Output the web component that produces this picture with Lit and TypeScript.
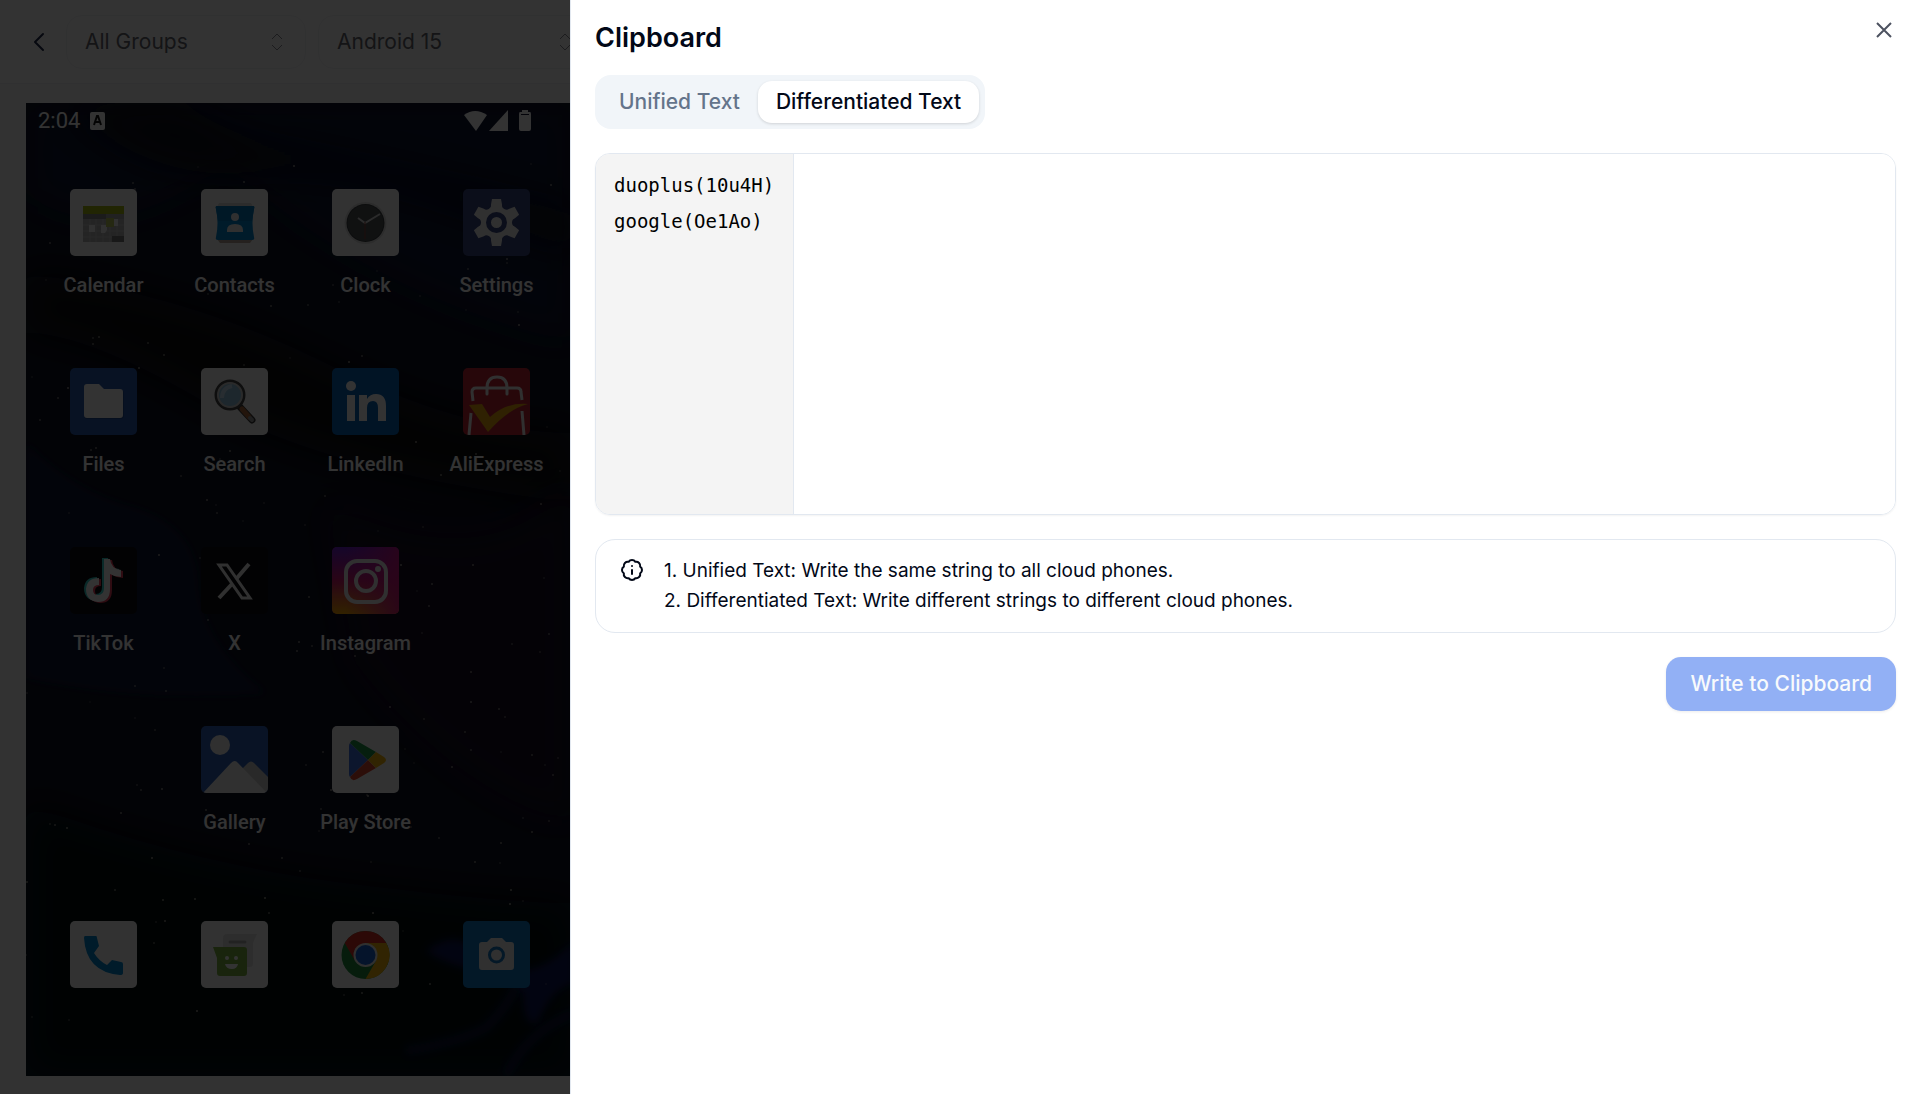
import { LitElement, html, css, svg, nothing } from "lit";
import { customElement, state } from "lit/decorators.js";

type App = { name: string; art: unknown; bg: string };

const calendar = svg`
  <rect x="13" y="17" width="41" height="36" fill="#b5b5b5"/>
  <rect x="13" y="17" width="41" height="8" fill="#a4b813"/>
  <rect x="13" y="25" width="23" height="5" fill="#858585"/>
  <rect x="36" y="25" width="18" height="5" fill="#a5a5a5"/>
  <path d="M13 36H54M13 42H54M13 48H54M20 30V53M26 30V53M33 30V53M40 30V53M47 30V53" stroke="#c8c8c8" stroke-width="1"/>
  <rect x="19" y="36" width="6" height="7" fill="#f3f3f3"/>
  <path d="M31 36H37V41L35 44H31Z" fill="#f3f3f3"/>
  <rect x="43" y="30" width="5" height="7" fill="#f3f3f3"/>
  <rect x="36" y="29" width="8" height="9" fill="#b7c95c"/>
  <rect x="42" y="47" width="12" height="6" fill="#7b7b7b"/>`;

const contacts = svg`
  <path d="M16 50H52L49 54H19Z" fill="#b9a79c"/>
  <path d="M18 14H50L52 18H16Z" fill="#d9d9d9"/>
  <path d="M16 17H52Q54 17 53 20Q50 34 53 48Q54 51 51 51H17Q14 51 15 48Q18 34 15 20Q14 17 16 17Z" fill="#0288d1"/>
  <path d="M16 17H52Q54 17 53 20L51 32H17L15 20Q14 17 16 17Z" fill="#0277bd"/>
  <circle cx="34" cy="28" r="4" fill="#eee"/>
  <path d="M26 43V41Q26 35 34 35Q42 35 42 41V43Z" fill="#eee"/>`;

const clock = svg`
  <circle cx="33.5" cy="34" r="21" fill="#dcdcdc"/>
  <circle cx="33.5" cy="34" r="19" fill="#3c4043"/>
  <circle cx="33.5" cy="34" r="18" fill="#515658"/>
  <path d="M26 29L33 34L48 25" fill="none" stroke="#d5d5d5" stroke-width="2"/>
  <path d="M33 33V50" stroke="#8e4038" stroke-width="1"/>`;

const settings = svg`
  <g fill="#eee">
    <circle cx="33.5" cy="33.5" r="17"/>
    ${[0, 60, 120, 180, 240, 300].map(
      (a) => svg`<path d="M27 21L29 10H38L40 21Z" transform="rotate(${a} 33.5 33.5)"/>`
    )}
  </g>
  ${[30, 90, 150, 210, 270, 330].map(
    (a) => svg`<circle cx="33.5" cy="14" r="4" fill="#3a4680" transform="rotate(${a} 33.5 33.5)"/>`
  )}
  <circle cx="33.5" cy="33.5" r="8" fill="#eee" stroke="#3a4680" stroke-width="5"/>`;

const files = svg`
  <path d="M16 17H29L34 22H51Q54 22 54 25V48Q54 51 51 51H17Q14 51 14 48V20Q14 17 16 17Z" fill="#214a94"/>
  <path d="M17 16H29L34 21H50Q53 21 53 24V47Q53 50 50 50H17Q14 50 14 47V19Q14 16 17 16Z" fill="#fff"/>`;

const search = svg`
  <path d="M39 39L51 52" stroke="#3a3a3a" stroke-width="7" stroke-linecap="round"/>
  <path d="M41 41L48 49" stroke="#b06a3c" stroke-width="5" stroke-linecap="round"/>
  <path d="M49 50L51 52" stroke="#9a9a9a" stroke-width="4" stroke-linecap="round"/>
  <circle cx="29" cy="27" r="14" fill="#8fc0de" stroke="#454545" stroke-width="3"/>
  <circle cx="29" cy="27" r="12" fill="none" stroke="#d2d2d2" stroke-width="2"/>
  <path d="M21 30Q21 20 31 18" fill="none" stroke="#c7e2f2" stroke-width="4"/>`;

const linkedin = svg`
  <g fill="#fff">
    <circle cx="19" cy="18" r="5"/>
    <rect x="15" y="27" width="8" height="26"/>
    <path d="M27 27H35V31Q38 26 44 26Q54 26 54 38V53H46V40Q46 33 41 33Q35 33 35 40V53H27Z"/>
  </g>`;

const aliexpress = svg`
  <g fill="none" stroke="#eee" stroke-width="3">
    <path d="M10 33L9 24Q9 20 13 20H54Q58 20 58 24L59 32"/>
    <path d="M24 26V20Q24 9 34 9Q44 9 44 20V26" stroke-linecap="round"/>
    <path d="M8 45L6 67M59 43L61 67"/>
  </g>
  <path d="M6 37L19 36L27 49Q44 34 65 36Q45 41 25 64Z" fill="#e8a70c"/>`;

const note = "M34 12H40Q41 22 51 23V30Q45 30 40 27V42Q40 55 28 55Q16 54 16 42Q17 31 29 31V38Q23 38 23 43Q23 48 28 48Q34 48 34 41Z";
const tiktok = svg`
  <path d="${note}" transform="translate(-2 -1)" fill="#35d0cc"/>
  <path d="${note}" transform="translate(2 1)" fill="#e83e5a"/>
  <path d="${note}" fill="#fff"/>`;

const xLogo = svg`
  <path d="M18 18H26L49 51H41Z" fill="none" stroke="#eee" stroke-width="3"/>
  <path d="M48 17L36 31M31 37L18 51" stroke="#eee" stroke-width="4"/>`;

const instagram = svg`
  <defs>
    <linearGradient id="ig" x1="0" y1="0" x2="0" y2="1">
      <stop offset="0" stop-color="#6a1fd0"/><stop offset=".5" stop-color="#cf1a6e"/><stop offset="1" stop-color="#f5a700"/>
    </linearGradient>
    <linearGradient id="ig2" x1="0" y1="0" x2="1" y2="0">
      <stop offset=".2" stop-color="#c2189b" stop-opacity="0"/><stop offset="1" stop-color="#d0137f" stop-opacity=".9"/>
    </linearGradient>
  </defs>
  <rect width="67" height="67" fill="url(#ig)"/>
  <rect width="67" height="67" fill="url(#ig2)"/>
  <g fill="none" stroke="#eee" stroke-width="4">
    <rect x="14" y="14" width="40" height="41" rx="11"/>
    <circle cx="34" cy="34" r="10"/>
  </g>
  <circle cx="46" cy="22" r="3" fill="#eee"/>`;

const gallery = svg`
  <circle cx="19" cy="19" r="10" fill="#eee"/>
  <path d="M40 44L47 37Q50 34 53 37L67 51V67H50Z" fill="#cdcdcd"/>
  <path d="M2 67L30 37Q34 33 37 37L66 67Z" fill="#eee"/>`;

const play = svg`
  <path d="M18 17L36 34L18 51Q17 50 17 48V20Q17 18 18 17Z" fill="#3f6fe0"/>
  <path d="M18 17Q20 12 25 15L44 26L36 34Z" fill="#1e9648"/>
  <path d="M18 51Q20 56 25 53L44 42L36 34Z" fill="#dd4530"/>
  <path d="M44 26L52 31Q56 34 52 37L44 42L36 34Z" fill="#f2b50c"/>`;

const phone = svg`<path d="M15 15H26Q27 15 27 17L29 25L24 32Q29 40 37 44L42 39L51 41Q53 41 53 43V52Q53 54 50 54Q16 51 14 17Q14 15 15 15Z" fill="#0288d1"/>`;

const messages = svg`
  <path d="M22 17Q22 13 26 13H56L52 22V43Q52 46 49 46H25Q22 46 22 43Z" fill="#e2e2e2"/>
  <path d="M29 21H44" stroke="#aaa" stroke-width="3" stroke-linecap="round"/>
  <path d="M12 26H43Q46 26 46 29V52Q46 55 43 55H19Q16 55 16 52V37Z" fill="#7cb342"/>
  <circle cx="26" cy="37" r="2" fill="#fff"/><circle cx="35" cy="37" r="2" fill="#fff"/>
  <path d="M24 43H37Q36 48 31 48Q25 48 24 43Z" fill="#fff"/>`;

const chrome = svg`
  <circle cx="33.5" cy="34" r="24" fill="#1e8e3e"/>
  <path d="M12.7 22A24 24 0 0 1 54.3 22H33.5V34L23.1 40Z" fill="#d93025"/>
  <path d="M54.3 22A24 24 0 0 1 33.5 58L43.9 40L33.5 22Z" fill="#f2b50c"/>
  <circle cx="33.5" cy="34" r="12" fill="#eee"/>
  <circle cx="33.5" cy="34" r="10" fill="#1a66d8"/>`;

const camera = svg`
  <path d="M19 21H24L28 17H39L43 21H48Q51 21 51 24V46Q51 49 48 49H19Q16 49 16 46V24Q16 21 19 21Z" fill="#eee"/>
  <circle cx="33.5" cy="34" r="7" fill="none" stroke="#1877c0" stroke-width="3"/>`;

const LIGHT = "#fbfbfb";
const APPS: (App | null)[] = [
  { name: "Calendar", art: calendar, bg: LIGHT },
  { name: "Contacts", art: contacts, bg: LIGHT },
  { name: "Clock", art: clock, bg: LIGHT },
  { name: "Settings", art: settings, bg: "#3a4680" },
  { name: "Files", art: files, bg: "#2a5db0" },
  { name: "Search", art: search, bg: LIGHT },
  { name: "LinkedIn", art: linkedin, bg: "#0763b8" },
  { name: "AliExpress", art: aliexpress, bg: "#c32734" },
  { name: "TikTok", art: tiktok, bg: "#0c0c10" },
  { name: "X", art: xLogo, bg: "#0c0c10" },
  { name: "Instagram", art: instagram, bg: "#b01a7a" },
  null,
  null,
  { name: "Gallery", art: gallery, bg: "#2f62b8" },
  { name: "Play Store", art: play, bg: LIGHT },
  null,
];
const DOCK: App[] = [
  { name: "Phone", art: phone, bg: LIGHT },
  { name: "Messages", art: messages, bg: LIGHT },
  { name: "Chrome", art: chrome, bg: LIGHT },
  { name: "Camera", art: camera, bg: "#1277c4" },
];

@customElement("phone-screen")
export class PhoneScreen extends LitElement {
  static styles = css`
    :host { display: block; }
    .screen {
      position: relative; display: flex; flex-direction: column; height: 100%;
      overflow: hidden; background: #080d22; color: #fff;
      font: 500 20px/24px Roboto, sans-serif;
    }
    .wallpaper { position: absolute; inset: 0; width: 100%; height: 100%; }
    .status {
      position: relative; display: flex; align-items: center; gap: 10px;
      padding: 6px 26px 0 12px; font-size: 22px; font-weight: 400;
    }
    .signals { display: flex; align-items: center; margin-left: auto; }
    .apps, .dock {
      position: relative; display: grid; grid-template-columns: repeat(4, 1fr);
      padding: 0 12px; justify-items: center;
    }
    .apps { margin-top: 56px; grid-auto-rows: 179px; }
    .dock { margin-top: 16px; }
    .app {
      display: flex; flex-direction: column; align-items: center; gap: 17px;
      height: 67px; padding: 0; border: 0; background: none; color: inherit; font: inherit;
      white-space: nowrap;
    }
    .icon { display: block; flex: none; width: 67px; height: 67px; border-radius: 5px; }
  `;

  private stars() {
    let seed = 7;
    const next = () => (seed = (seed * 16807) % 2147483647) / 2147483647;
    return Array.from({ length: 190 }, () => {
      const x = Math.round(next() * 548);
      const y = Math.round(60 + next() * 860);
      const o = Math.round(20 + next() * 60) / 100;
      return svg`<circle cx=${x} cy=${y} r="1" fill="#b9b4a8" opacity=${o}/>`;
    });
  }

  private app(a: App, label: boolean) {
    return html`<button class="app" aria-label=${a.name}>
      <svg class="icon" viewBox="0 0 67 67" aria-hidden="true">
        <rect width="67" height="67" fill=${a.bg} />${a.art}
      </svg>
      ${label ? html`<span>${a.name}</span>` : nothing}
    </button>`;
  }

  render() {
    return html`<div class="screen">
      <svg class="wallpaper" viewBox="0 0 548 973" preserveAspectRatio="none" aria-hidden="true">
        <defs>
          <filter id="soft" x="-20%" y="-20%" width="140%" height="140%"><feGaussianBlur stdDeviation="18" /></filter>
          <filter id="fine" x="-20%" y="-20%" width="140%" height="140%"><feGaussianBlur stdDeviation="4" /></filter>
        </defs>
        <rect width="548" height="973" fill="#0d1020" />
        <path d="M0 0H548V240Q340 190 200 60Q80 150 0 90Z" fill="#0f1630" filter="url(#soft)" />
        <path d="M40 0Q120 80 230 70Q340 60 548 150V110Q360 60 240 40Q180 20 160 0Z" fill="#080a16" filter="url(#soft)" />
        <path d="M0 170Q160 190 300 260T548 330V400Q300 370 180 300T0 230Z" fill="#070810" filter="url(#soft)" />
        <path d="M0 340Q50 390 110 405Q170 425 172 480Q175 540 240 590Q120 600 0 575Z" fill="#0a1636" filter="url(#fine)" />
        <path d="M300 400Q460 480 548 380V720Q430 690 330 560Z" fill="#120f20" filter="url(#soft)" />
        <path d="M0 700Q160 760 320 780T548 800V973H0Z" fill="#06070c" filter="url(#soft)" />
        <path d="M400 848Q430 825 450 848Q475 865 490 868Q520 868 548 838V880Q525 885 512 920Q497 925 497 890Q480 880 470 868Q430 868 400 848Z" fill="#0d1858" filter="url(#fine)" />
        <path d="M380 948Q430 940 460 925Q480 905 490 885M480 973Q500 930 548 910" fill="none" stroke="#0b1442" stroke-width="8" filter="url(#fine)" />
        ${this.stars()}
      </svg>
      <div class="status">
        <span>2:04</span>
        <svg width="16" height="18" viewBox="0 0 16 18" aria-hidden="true">
          <rect width="15" height="18" rx="2" fill="#fff" />
          <path d="M4 13L7 4H8L11 13M5 10H10" fill="none" stroke="#111" stroke-width="2" />
        </svg>
        <svg class="signals" width="84" height="24" viewBox="0 0 84 24" fill="#fff" aria-hidden="true">
          <path d="M0 6Q11-2 23 6L12 22Z" />
          <path d="M44 1V22H25Z" />
          <path d="M56 3H58V1H64V3H66Q67 3 67 5V20Q67 22 65 22H57Q55 22 55 20V5Q55 3 56 3ZM57 6H65V5H57Z" fill-rule="evenodd" />
        </svg>
      </div>
      <div class="apps">${APPS.map((a) => (a ? this.app(a, true) : html`<span></span>`))}</div>
      <div class="dock">${DOCK.map((a) => this.app(a, false))}</div>
    </div>`;
  }
}

@customElement("app-root")
export class AppRoot extends LitElement {
  @state() private tab = "different";

  static styles = css`
    :host {
      display: block; position: relative; min-height: 100vh; overflow: hidden;
      background: #fafafa; color: #020817; font: 400 19px/30px Inter, sans-serif;
    }
    * { box-sizing: border-box; }
    button, select, textarea { font: inherit; color: inherit; }
    .page { display: flex; flex-direction: column; height: 100vh; }
    .bar {
      display: flex; align-items: center; gap: 12px; padding: 15px 24px 14px;
      border-bottom: 1px solid #f1f1f4; background: #fff;
    }
    .back { display: flex; padding: 0; margin-right: 8px; border: 0; background: none; color: #1f2a4a; }
    .picker { position: relative; display: flex; width: 240px; }
    .picker.wide { width: 276px; }
    .picker select {
      appearance: none; width: 100%; height: 54px; padding: 0 44px 0 18px; font-size: 21px;
      border: 1px solid #f1f3f6; border-radius: 16px; background: #fff; color: #64676e;
    }
    .picker svg { position: absolute; right: 22px; top: 18px; pointer-events: none; }
    .device { flex: 1; width: 548px; min-height: 0; margin: 19px 0 18px 26px; }
    .scrim { position: absolute; inset: 0; background: rgba(0, 0, 0, 0.8); }
    .sheet {
      position: absolute; top: 0; right: 0; bottom: 0; width: calc(100% - 570px);
      display: flex; flex-direction: column; gap: 24px; padding: 20px 24px;
      border-left: 1px solid #e2e8f0; background: #fff;
    }
    h2 { margin: 0 0 -5px; font-size: 27px; line-height: 36px; font-weight: 600; }
    .close {
      position: absolute; top: 20px; right: 26px; display: flex; padding: 0;
      border: 0; background: none; color: #4d5260;
    }
    .tabs {
      display: flex; align-self: flex-start; padding: 6px; border-radius: 16px; background: #f1f5f9;
    }
    .tab {
      height: 42px; padding: 0 18px; border: 0; border-radius: 14px; background: none;
      color: #64748b; font-size: 21px; font-weight: 500;
    }
    .tab.on { background: #fff; color: #020817; box-shadow: 0 1px 3px rgba(0, 0, 0, 0.14); }
    .editor {
      display: flex; height: 362px; overflow: hidden; border: 1px solid #e2e8f0; border-radius: 15px;
      box-shadow: 0 1px 2px rgba(0, 0, 0, 0.05);
    }
    .names, textarea { font: 19px/36px "DejaVu Sans Mono", monospace; }
    .names {
      margin: 0; padding: 13px 19px 13px 18px; border-right: 1px solid #e2e8f0; background: #f4f4f4;
      list-style: none; color: #000;
    }
    textarea { flex: 1; padding: 13px 18px; border: 0; outline: 0; resize: none; background: #fff; }
    .note {
      display: flex; gap: 20px; padding: 16px 24px; border: 1px solid #e2e8f0; border-radius: 20px;
    }
    .note svg { flex: none; margin-top: 2px; }
    .note p { margin: 0; }
    .write {
      align-self: flex-end; height: 54px; padding: 0 24px; border: 0; border-radius: 15px;
      background: #92b0f5; color: #f8fafc; font-size: 21px; font-weight: 500;
      box-shadow: 0 1px 3px rgba(0, 0, 0, 0.08);
    }
  `;

  private chevrons() {
    return html`<svg width="14" height="18" viewBox="0 0 14 18" fill="none" stroke="#8a8d94" stroke-width="1" aria-hidden="true">
      <path d="M2 6L7 1L12 6M2 12L7 17L12 12" />
    </svg>`;
  }

  private tabButton(id: string, text: string) {
    const on = this.tab === id;
    return html`<button class="tab ${on ? "on" : ""}" role="tab" aria-selected=${on} @click=${() => (this.tab = id)}>${text}</button>`;
  }

  render() {
    return html`
      <div class="page">
        <header class="bar">
          <button class="back" aria-label="Back">
            <svg width="22" height="24" viewBox="0 0 22 24" fill="none" stroke="currentColor" stroke-width="2" stroke-linecap="round" stroke-linejoin="round">
              <path d="M19 4L11 12L19 20" />
            </svg>
          </button>
          <div class="picker">
            <select aria-label="Group"><option>All Groups</option></select>${this.chevrons()}
          </div>
          <div class="picker wide">
            <select aria-label="System"><option>Android 15</option></select>${this.chevrons()}
          </div>
        </header>
        <phone-screen class="device"></phone-screen>
      </div>
      <div class="scrim"></div>
      <section class="sheet" role="dialog" aria-labelledby="title">
        <h2 id="title">Clipboard</h2>
        <button class="close" aria-label="Close">
          <svg width="20" height="20" viewBox="0 0 20 20" fill="none" stroke="currentColor" stroke-width="2">
            <path d="M3 3L17 17M17 3L3 17" />
          </svg>
        </button>
        <div class="tabs" role="tablist">
          ${this.tabButton("unified", "Unified Text")}${this.tabButton("different", "Differentiated Text")}
        </div>
        <div class="editor">
          <ul class="names"><li>duoplus(10u4H)</li><li>google(Oe1Ao)</li></ul>
          <textarea aria-label="Clipboard text"></textarea>
        </div>
        <div class="note">
          <svg width="24" height="24" viewBox="0 0 24 24" fill="none" stroke="currentColor" stroke-width="2" stroke-linecap="round" stroke-linejoin="round" aria-hidden="true">
            <path d="M3.85 8.62a4 4 0 0 1 4.78-4.77 4 4 0 0 1 6.74 0 4 4 0 0 1 4.78 4.78 4 4 0 0 1 0 6.74 4 4 0 0 1-4.77 4.78 4 4 0 0 1-6.75 0 4 4 0 0 1-4.78-4.77 4 4 0 0 1 0-6.76Z" />
            <path d="M12 16V12M12 8H12.01" />
          </svg>
          <div>
            <p>1. Unified Text: Write the same string to all cloud phones.</p>
            <p>2. Differentiated Text: Write different strings to different cloud phones.</p>
          </div>
        </div>
        <button class="write">Write to Clipboard</button>
      </section>
    `;
  }
}
